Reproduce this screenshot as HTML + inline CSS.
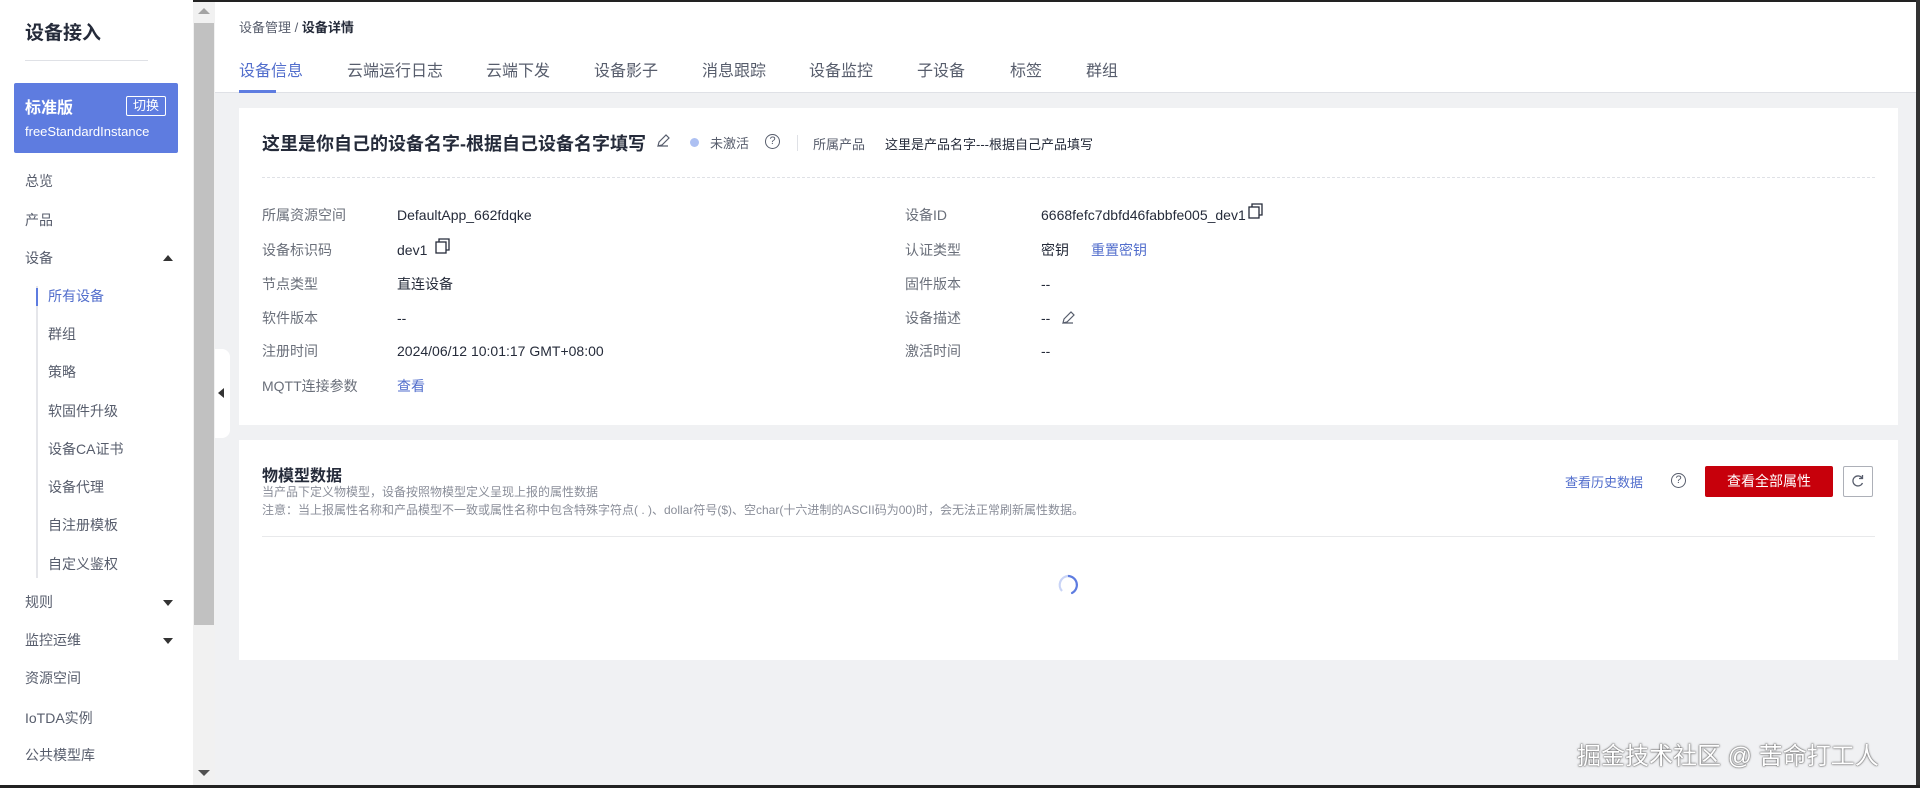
<!DOCTYPE html>
<html><head><meta charset="utf-8"><style>
*{margin:0;padding:0;box-sizing:border-box}
body{width:1920px;height:788px;position:relative;overflow:hidden;background:#f0f1f3;font-family:"Liberation Sans","Noto Sans CJK SC",sans-serif;color:#252b3a;font-size:14px}
.a{position:absolute;white-space:nowrap}
.sb{position:absolute;left:0;top:0;width:193px;height:788px;background:#fff}
.mi{position:absolute;left:25px;font-size:14px;color:#575d6c;line-height:20px}
.sub{left:48px}
.lbl{position:absolute;color:#6a6f7a;font-size:14px;line-height:20px}
.val{position:absolute;color:#252b3a;font-size:14px;line-height:20px}
.blue{color:#526ecc}
.tab{position:absolute;top:61px;font-size:16px;color:#575d6c;line-height:22px}
.arr{position:absolute;left:163px;width:0;height:0;border-left:5px solid transparent;border-right:5px solid transparent}
</style></head><body>
<div class="a" style="left:0;top:0;width:1920px;height:2px;background:#222"></div>
<div class="sb">
 <div class="a" style="left:25px;top:18px;font-size:19px;font-weight:bold;color:#252b3a">设备接入</div>
 <div class="a" style="left:25px;top:60px;width:123px;height:1px;background:#dfe1e6"></div>
 <div class="a" style="left:14px;top:83px;width:164px;height:70px;background:#5e7ce0;border-radius:2px"></div>
 <div class="a" style="left:25px;top:94px;font-size:16px;font-weight:bold;color:#fff">标准版</div>
 <div class="a" style="left:126px;top:96px;width:40px;height:20px;border:1px solid #fff;border-radius:2px;color:#fff;font-size:13px;text-align:center;line-height:18px">切换</div>
 <div class="a" style="left:25px;top:124px;font-size:13px;color:#fff">freeStandardInstance</div>
 <div class="mi" style="top:171px">总览</div>
 <div class="mi" style="top:210px">产品</div>
 <div class="mi" style="top:248px">设备</div>
 <div class="arr" style="top:255px;border-bottom:6px solid #333"></div>
 <div class="a" style="left:36px;top:286px;width:2px;height:292px;background:#e5e6ea"></div>
 <div class="a" style="left:36px;top:288px;width:2px;height:18px;background:#5e7ce0"></div>
 <div class="mi sub" style="top:286px;color:#526ecc">所有设备</div>
 <div class="mi sub" style="top:324px">群组</div>
 <div class="mi sub" style="top:362px">策略</div>
 <div class="mi sub" style="top:401px">软固件升级</div>
 <div class="mi sub" style="top:439px">设备CA证书</div>
 <div class="mi sub" style="top:477px">设备代理</div>
 <div class="mi sub" style="top:515px">自注册模板</div>
 <div class="mi sub" style="top:554px">自定义鉴权</div>
 <div class="mi" style="top:592px">规则</div>
 <div class="arr" style="top:600px;border-top:6px solid #333"></div>
 <div class="mi" style="top:630px">监控运维</div>
 <div class="arr" style="top:638px;border-top:6px solid #333"></div>
 <div class="mi" style="top:668px">资源空间</div>
 <div class="mi" style="top:708px">IoTDA实例</div>
 <div class="mi" style="top:745px">公共模型库</div>
</div>
<div class="a" style="left:193px;top:2px;width:22px;height:783px;background:#f1f1f1"></div>
<div class="a" style="left:194px;top:23px;width:20px;height:602px;background:#c1c1c1"></div>
<div class="a" style="left:198px;top:8px;border-left:6px solid transparent;border-right:6px solid transparent;border-bottom:6px solid #a3a3a3"></div>
<div class="a" style="left:198px;top:770px;border-left:6px solid transparent;border-right:6px solid transparent;border-top:6px solid #505050"></div>
<div class="a" style="left:215px;top:2px;width:1705px;height:91px;background:#fff;border-bottom:1px solid #dfe1e6"></div>
<div class="a" style="left:215px;top:349px;width:15px;height:89px;background:#fff;border-radius:0 8px 8px 0"></div>
<div class="a" style="left:218px;top:388px;border-top:5px solid transparent;border-bottom:5px solid transparent;border-right:6px solid #333"></div>
<div class="a" style="left:239px;top:17px;font-size:13px;color:#575d6c">设备管理 / <b style="color:#252b3a">设备详情</b></div>
<div class="tab" style="left:239px;color:#526ecc">设备信息</div>
<div class="a" style="left:239px;top:90px;width:37px;height:3px;background:#5e7ce0"></div>
<div class="tab" style="left:347px">云端运行日志</div>
<div class="tab" style="left:486px">云端下发</div>
<div class="tab" style="left:594px">设备影子</div>
<div class="tab" style="left:702px">消息跟踪</div>
<div class="tab" style="left:809px">设备监控</div>
<div class="tab" style="left:917px">子设备</div>
<div class="tab" style="left:1010px">标签</div>
<div class="tab" style="left:1086px">群组</div>

<div class="a" style="left:239px;top:108px;width:1659px;height:317px;background:#fff"></div>
<div class="a" style="left:262px;top:130px;font-size:18px;font-weight:bold;color:#252b3a">这里是你自己的设备名字-根据自己设备名字填写</div>
<svg class="a" style="left:655px;top:133px" width="16" height="16" viewBox="0 0 16 16"><path d="M3 13l1-4 7-7 3 3-7 7zM3 13h10" fill="none" stroke="#575d6c" stroke-width="1.2"/></svg>
<div class="a" style="left:690px;top:138px;width:9px;height:9px;border-radius:50%;background:#adc0f2"></div>
<div class="a" style="left:710px;top:133px;font-size:13px;color:#575d6c">未激活</div>
<div class="a" style="left:765px;top:134px;width:15px;height:15px;border:1px solid #575d6c;border-radius:50%;font-size:11px;text-align:center;line-height:13px;color:#575d6c">?</div>
<div class="a" style="left:797px;top:135px;width:1px;height:16px;background:#dfe1e6"></div>
<div class="a" style="left:813px;top:134px;font-size:13px;color:#575d6c">所属产品</div>
<div class="a" style="left:885px;top:134px;font-size:13px;color:#252b3a">这里是产品名字---根据自己产品填写</div>
<div class="a" style="left:262px;top:177px;width:1613px;border-top:1px dashed #dfe1e6"></div>

<div class="lbl" style="left:262px;top:205px">所属资源空间</div><div class="val" style="left:397px;top:205px">DefaultApp_662fdqke</div>
<div class="lbl" style="left:262px;top:240px">设备标识码</div><div class="val" style="left:397px;top:240px">dev1</div>
<svg class="a" style="left:434px;top:237px" width="18" height="18" viewBox="0 0 18 18"><rect x="2" y="5" width="10" height="11" fill="none" stroke="#252b3a" stroke-width="1.3"/><path d="M5 5V2h10v11h-3" fill="none" stroke="#252b3a" stroke-width="1.3"/></svg>
<div class="lbl" style="left:262px;top:274px">节点类型</div><div class="val" style="left:397px;top:274px">直连设备</div>
<div class="lbl" style="left:262px;top:308px">软件版本</div><div class="val" style="left:397px;top:308px">--</div>
<div class="lbl" style="left:262px;top:341px">注册时间</div><div class="val" style="left:397px;top:341px">2024/06/12 10:01:17 GMT+08:00</div>
<div class="lbl" style="left:262px;top:376px">MQTT连接参数</div><div class="val blue" style="left:397px;top:376px">查看</div>

<div class="lbl" style="left:905px;top:205px">设备ID</div><div class="val" style="left:1041px;top:205px">6668fefc7dbfd46fabbfe005_dev1</div>
<svg class="a" style="left:1247px;top:202px" width="18" height="18" viewBox="0 0 18 18"><rect x="2" y="5" width="10" height="11" fill="none" stroke="#252b3a" stroke-width="1.3"/><path d="M5 5V2h10v11h-3" fill="none" stroke="#252b3a" stroke-width="1.3"/></svg>
<div class="lbl" style="left:905px;top:240px">认证类型</div><div class="val" style="left:1041px;top:240px">密钥</div><div class="val blue" style="left:1091px;top:240px">重置密钥</div>
<div class="lbl" style="left:905px;top:274px">固件版本</div><div class="val" style="left:1041px;top:274px">--</div>
<div class="lbl" style="left:905px;top:308px">设备描述</div><div class="val" style="left:1041px;top:308px">--</div>
<svg class="a" style="left:1060px;top:310px" width="16" height="16" viewBox="0 0 16 16"><path d="M3 13l1-4 7-7 3 3-7 7zM3 13h10" fill="none" stroke="#575d6c" stroke-width="1.2"/></svg>
<div class="lbl" style="left:905px;top:341px">激活时间</div><div class="val" style="left:1041px;top:341px">--</div>

<div class="a" style="left:239px;top:440px;width:1659px;height:220px;background:#fff"></div>
<div class="a" style="left:262px;top:462px;font-size:16px;font-weight:bold;color:#252b3a">物模型数据</div>
<div class="a" style="left:262px;top:483px;font-size:12px;color:#8a8e99">当产品下定义物模型，设备按照物模型定义呈现上报的属性数据</div>
<div class="a" style="left:262px;top:501px;font-size:12px;color:#8a8e99">注意：当上报属性名称和产品模型不一致或属性名称中包含特殊字符点( . )、dollar符号($)、空char(十六进制的ASCII码为00)时，会无法正常刷新属性数据。</div>
<div class="a" style="left:1565px;top:472px;font-size:13px;color:#526ecc">查看历史数据</div>
<div class="a" style="left:1671px;top:473px;width:15px;height:15px;border:1px solid #575d6c;border-radius:50%;font-size:11px;text-align:center;line-height:13px;color:#575d6c">?</div>
<div class="a" style="left:1705px;top:466px;width:128px;height:31px;background:#c7000b;color:#fff;font-size:14px;text-align:center;line-height:31px;border-radius:2px">查看全部属性</div>
<div class="a" style="left:1843px;top:466px;width:30px;height:31px;border:1px solid #adb0b8;border-radius:2px"></div>
<svg class="a" style="left:1851px;top:474px" width="14" height="14" viewBox="0 0 14 14"><path d="M11 4A5 5 0 1 0 11.5 9" fill="none" stroke="#575d6c" stroke-width="1.3"/><path d="M11.5 1v3.5H8" fill="none" stroke="#575d6c" stroke-width="1.3"/></svg>
<div class="a" style="left:262px;top:536px;width:1613px;height:1px;background:#e8e9eb"></div>
<svg class="a" style="left:1056px;top:573px" width="24" height="24" viewBox="0 0 24 24"><path d="M12 3a9 9 0 0 1 4 17" fill="none" stroke="#5e7ce0" stroke-width="2.2" stroke-linecap="round"/><path d="M12 3a9 9 0 0 0-6 15" fill="none" stroke="#c9d4f6" stroke-width="2.2"/></svg>
<div class="a" style="left:1577px;top:736px;font-size:24px;color:#fff;text-shadow:0 0 2px #555,0 0 1px #333">掘金技术社区 @ 苦命打工人</div>
<div class="a" style="left:1916px;top:0;width:4px;height:788px;background:#333"></div>
<div class="a" style="left:0;top:785px;width:1920px;height:3px;background:#222"></div>
</body></html>
